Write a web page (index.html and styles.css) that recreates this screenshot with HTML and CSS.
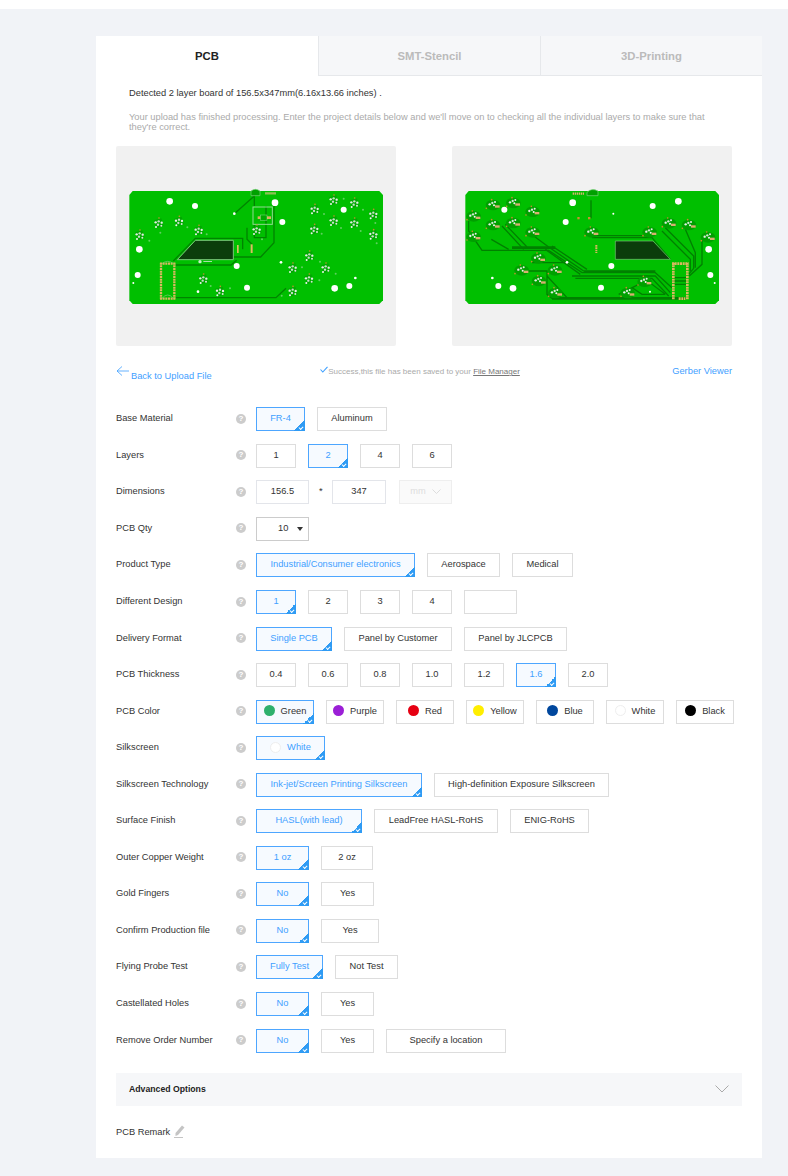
FILE: index.html
```html
<!DOCTYPE html>
<html lang="en">
<head>
  <meta charset="UTF-8" />
  <title>PCB Quote</title>
  <link rel="stylesheet" href="styles.css">
</head>
<body>
  <div class="topbar"></div>

  <!-- shared board parts -->
  <svg class="defs" width="0" height="0">
    <defs>
      <g id="part">
        <path d="M-13 -9 L9 -15 L16 8 L-5 15 Z" fill="#00a800"/>
        <circle cx="-8" cy="-3" r="3.5" fill="#e4efe4"/>
        <circle cx="1" cy="-6" r="3.5" fill="#c4e0c6"/>
        <circle cx="10" cy="-2" r="3.5" fill="#e4efe4"/>
        <circle cx="-1" cy="4" r="3.5" fill="#c4e0c6"/>
        <circle cx="9" cy="7" r="3" fill="#d4e8d4"/>
        <circle cx="-7" cy="11" r="3" fill="#eef5ee"/>
        <circle cx="2" cy="-16" r="2.5" fill="#c88a30"/>
      </g>
      <g id="part-back">
        <ellipse cx="1" cy="2" rx="22" ry="16" fill="#00a000"/>
        <circle cx="-9" cy="0" r="3.5" fill="#e4efe4"/>
        <circle cx="-1" cy="-4" r="3.5" fill="#cfe8d0"/>
        <circle cx="7" cy="-7" r="3" fill="#e4efe4"/>
        <circle cx="4" cy="3" r="3" fill="#eef5ee"/>
        <rect x="7" y="3" width="14" height="7" fill="#d8b070"/>
        <circle cx="-3" cy="-14" r="2.5" fill="#c88a30"/>
        <circle cx="-19" cy="12" r="2.5" fill="#c88a30"/>
      </g>
    </defs>
  </svg>

  <div class="card">
    <div class="tabs">
      <div class="tab active">PCB</div>
      <div class="tab">SMT-Stencil</div>
      <div class="tab">3D-Printing</div>
    </div>

    <div class="intro">
      <p class="detected">Detected 2 layer board of 156.5x347mm(6.16x13.66 inches) .</p>
      <p class="note">Your upload has finished processing. Enter the project details below and we'll move on to checking all the individual layers to make sure that they're correct.</p>
    </div>

    <div class="previews">
      <div class="preview">
        <svg width="280" height="130" viewBox="0 0 840 390">
          <path d="M50 30 H790 L801 42 V358 L790 369 H50 L40 358 V42 Z" fill="#00bf00"/>
          <path d="M355 98 L415 45 V75 M393 140 V175 L408 190 V215 M415 130 V170 H450 V75 M474 60 V185 L434 228 H352 M172 240 L238 172 H380 V205 M180 252 H345 L362 238 M180 350 H480 L510 322" fill="none" stroke="#008400" stroke-width="4"/>
          <path d="M405 30 Q418 20 432 30 V44 H405 Z" fill="#00a000" stroke="#7bd07b" stroke-width="2"/>
          <path d="M448 37 H480" stroke="#d8c080" stroke-width="7" stroke-dasharray="4 2"/>
          <path d="M238 178 H352 V236 H184 Z" fill="#0b3d0b" stroke="#79c879" stroke-width="3"/>
          <rect x="411" y="78" width="58" height="52" fill="none" stroke="#8fdc8f" stroke-width="3"/>
          <rect x="425" y="106" width="40" height="8" fill="#d8b060"/>
          <rect x="433" y="102" width="20" height="16" fill="#00a800" stroke="#c8eec8"/>
          <rect x="363" y="192" width="5" height="24" fill="#d8c060"/>
          <rect x="404" y="190" width="6" height="26" fill="#d8c060"/>
          <path d="M135 245 V356 M175 245 V356 M132 248 H178 M132 353 H178" fill="none" stroke="#d8b860" stroke-width="7" stroke-dasharray="6 2"/>
          <path d="M138 248 Q155 234 172 248 M138 352 Q155 332 172 352" fill="none" stroke="#7bd07b" stroke-width="2"/>
          <circle cx="252" cy="242" r="5" fill="#c8eec8"/>
          <rect x="262" y="240" width="26" height="3" fill="#a8e0a8"/>
          <g fill="#fff">
            <circle cx="161" cy="61" r="10"/><circle cx="237" cy="75" r="9"/><circle cx="477" cy="65" r="10"/>
            <circle cx="499" cy="123" r="9"/><circle cx="683" cy="86" r="9"/><circle cx="70" cy="205" r="10"/>
            <circle cx="362" cy="255" r="9"/><circle cx="65" cy="282" r="9"/><circle cx="393" cy="320" r="9"/>
            <circle cx="656" cy="322" r="10"/><circle cx="700" cy="315" r="9"/><circle cx="355" cy="98" r="4"/>
            <circle cx="495" cy="244" r="4"/><circle cx="718" cy="291" r="4"/><circle cx="52" cy="306" r="3"/>
            <circle cx="246" cy="332" r="4"/>
          </g>
          <use href="#part" x="127" y="127"/><use href="#part" x="188" y="122"/><use href="#part" x="247" y="149"/>
          <use href="#part" x="70" y="163"/><use href="#part" x="595" y="86"/><use href="#part" x="652" y="58"/>
          <use href="#part" x="714" y="67"/><use href="#part" x="771" y="101"/><use href="#part" x="652" y="121"/>
          <use href="#part" x="714" y="127"/><use href="#part" x="594" y="146"/><use href="#part" x="771" y="162"/>
          <use href="#part" x="421" y="148"/><use href="#part" x="579" y="226"/><use href="#part" x="529" y="262"/>
          <use href="#part" x="628" y="262"/><use href="#part" x="578" y="295"/><use href="#part" x="529" y="332"/>
          <use href="#part" x="261" y="295"/><use href="#part" x="311" y="332"/>
          <g fill="#5fd05f">
            <circle cx="133" cy="155" r="3"/><circle cx="100" cy="179" r="3"/><circle cx="214" cy="139" r="3"/>
            <circle cx="272" cy="160" r="3"/><circle cx="624" cy="99" r="3"/><circle cx="683" cy="53" r="3"/>
            <circle cx="741" cy="86" r="3"/><circle cx="675" cy="141" r="3"/><circle cx="617" cy="158" r="3"/>
            <circle cx="734" cy="150" r="3"/><circle cx="778" cy="126" r="3"/><circle cx="782" cy="187" r="3"/>
            <circle cx="612" cy="242" r="3"/><circle cx="558" cy="259" r="3"/><circle cx="659" cy="278" r="3"/>
            <circle cx="610" cy="298" r="3"/><circle cx="284" cy="315" r="3"/><circle cx="342" cy="322" r="3"/>
            <circle cx="438" cy="175" r="3"/><circle cx="497" cy="344" r="3"/>
          </g>
        </svg>
      </div>
      <div class="preview">
        <svg width="280" height="130" viewBox="0 0 840 390">
          <path d="M50 30 H790 L801 42 V358 L790 369 H50 L40 358 V42 Z" fill="#00bf00"/>
          <g fill="none" stroke="#008000" stroke-width="4">
            <path d="M50 120 V150 L90 208 H290 L390 275 H610 L660 320"/>
            <path d="M118 175 L170 205 M160 130 L225 198 M225 150 L290 198 M150 135 L215 205"/>
            <path d="M290 198 L395 270 M300 195 L405 265 M280 205 L385 280"/>
            <path d="M240 245 H340 M190 270 H285 V340 L300 352 H700 M285 285 L345 350"/>
            <path d="M360 285 H610 L655 335 M370 292 H600 L650 345 M420 170 H600 L655 235 M430 164 H600"/>
            <path d="M640 140 L725 225 V262 L710 280 M630 150 L715 235 V270 M700 145 L730 215 V260 M750 170 V250 L712 285"/>
            <path d="M417 58 V112 M500 340 L560 310 H600 L640 340 M540 320 L570 340 H640"/>
            <path d="M660 290 H702 M660 300 H702 M660 310 H702"/>
          </g>
          <path d="M180 200 H310 M395 272 H610 M300 352 H700" fill="none" stroke="#008000" stroke-width="8"/>
          <path d="M405 34 Q418 20 438 30 V44 H405 Z" fill="#00a000" stroke="#7bd07b" stroke-width="2"/>
          <path d="M362 38 H396" stroke="#d8b070" stroke-width="7" stroke-dasharray="4 2"/>
          <path d="M490 180 H603 L655 235 H490 Z" fill="#0b3d0b" stroke="#79c879" stroke-width="2"/>
          <path d="M433 192 V216" stroke="#d8b860" stroke-width="6" stroke-dasharray="5 2"/>
          <rect x="376" y="108" width="7" height="7" fill="#c89030"/>
          <rect x="408" y="108" width="7" height="7" fill="#c89030"/>
          <path d="M664 245 V356 M706 245 V356 M660 248 H710 M680 353 H700" fill="none" stroke="#d8b860" stroke-width="8" stroke-dasharray="6 2"/>
          <g fill="#fff">
            <circle cx="362" cy="65" r="10"/><circle cx="157" cy="86" r="9"/><circle cx="602" cy="75" r="9"/>
            <circle cx="679" cy="61" r="10"/><circle cx="341" cy="123" r="9"/><circle cx="770" cy="205" r="10"/>
            <circle cx="478" cy="255" r="9"/><circle cx="775" cy="282" r="9"/><circle cx="447" cy="320" r="9"/>
            <circle cx="183" cy="322" r="10"/><circle cx="139" cy="315" r="9"/><circle cx="484" cy="98" r="3"/>
            <circle cx="345" cy="244" r="4"/><circle cx="121" cy="291" r="4"/><circle cx="788" cy="306" r="3"/>
            <circle cx="594" cy="332" r="3"/>
          </g>
          <use href="#part-back" x="122" y="70"/><use href="#part-back" x="183" y="64"/><use href="#part-back" x="241" y="90"/>
          <use href="#part-back" x="64" y="104"/><use href="#part-back" x="122" y="130"/><use href="#part-back" x="183" y="124"/>
          <use href="#part-back" x="241" y="152"/><use href="#part-back" x="64" y="165"/><use href="#part-back" x="418" y="152"/>
          <use href="#part-back" x="592" y="152"/><use href="#part-back" x="650" y="125"/><use href="#part-back" x="710" y="130"/>
          <use href="#part-back" x="767" y="167"/><use href="#part-back" x="258" y="230"/><use href="#part-back" x="208" y="266"/>
          <use href="#part-back" x="308" y="266"/><use href="#part-back" x="260" y="298"/><use href="#part-back" x="309" y="334"/>
          <use href="#part-back" x="577" y="300"/><use href="#part-back" x="526" y="334"/>
        </svg>
      </div>
    </div>

    <div class="links">
      <a class="back">
        <svg width="13" height="11" viewBox="0 0 13 11"><path d="M13 5 H1 M6 0.5 L1 5 L6 9.5" fill="none" stroke="#3fa0ff" stroke-width="0.8"/></svg>
        <span>Back to Upload File</span>
      </a>
      <div class="saved">
        <svg width="8" height="7" viewBox="0 0 8 7"><path d="M0.5 3.5 L2.8 6 L7.5 0.8" fill="none" stroke="#3fa0ff" stroke-width="1.1"/></svg>
        <span>Success,this file has been saved to your <u>File Manager</u></span>
      </div>
      <a class="viewer">Gerber Viewer</a>
    </div>

    <div class="form">
      <div class="row">
        <label>Base Material</label><i class="help">?</i>
        <div class="opts"><span class="opt on w49">FR-4</span><span class="opt w70">Aluminum</span></div>
      </div>
      <div class="row">
        <label>Layers</label><i class="help">?</i>
        <div class="opts"><span class="opt w40">1</span><span class="opt on w40">2</span><span class="opt w40">4</span><span class="opt w40">6</span></div>
      </div>
      <div class="row">
        <label>Dimensions</label><i class="help">?</i>
        <div class="opts">
          <span class="opt field w53">156.5</span><span class="times">*</span><span class="opt field w54">347</span>
          <span class="opt unit w53">mm
            <svg width="9" height="5" viewBox="0 0 9 5"><path d="M0.5 0.5 L4.5 4.5 L8.5 0.5" fill="none" stroke="#ddd"/></svg>
          </span>
        </div>
      </div>
      <div class="row">
        <label>PCB Qty</label><i class="help">?</i>
        <div class="opts"><span class="opt qty w53">10<b class="caret"></b></span></div>
      </div>
      <div class="row">
        <label>Product Type</label><i class="help">?</i>
        <div class="opts"><span class="opt on w159">Industrial/Consumer electronics</span><span class="opt w73">Aerospace</span><span class="opt w61">Medical</span></div>
      </div>
      <div class="row">
        <label>Different Design</label><i class="help">?</i>
        <div class="opts"><span class="opt on w40">1</span><span class="opt w40">2</span><span class="opt w40">3</span><span class="opt w40">4</span><span class="opt w53"></span></div>
      </div>
      <div class="row">
        <label>Delivery Format</label><i class="help">?</i>
        <div class="opts"><span class="opt on w76">Single PCB</span><span class="opt w108">Panel by Customer</span><span class="opt w103">Panel by JLCPCB</span></div>
      </div>
      <div class="row">
        <label>PCB Thickness</label><i class="help">?</i>
        <div class="opts"><span class="opt w40">0.4</span><span class="opt w40">0.6</span><span class="opt w40">0.8</span><span class="opt w40">1.0</span><span class="opt w40">1.2</span><span class="opt on w40">1.6</span><span class="opt w40">2.0</span></div>
      </div>
      <div class="row">
        <label>PCB Color</label><i class="help">?</i>
        <div class="opts">
          <span class="opt on plain w58"><i class="dot green"></i>Green</span>
          <span class="opt w58"><i class="dot purple"></i>Purple</span>
          <span class="opt w58"><i class="dot red"></i>Red</span>
          <span class="opt w58"><i class="dot yellow"></i>Yellow</span>
          <span class="opt w58"><i class="dot blue"></i>Blue</span>
          <span class="opt w58"><i class="dot white"></i>White</span>
          <span class="opt w58"><i class="dot black"></i>Black</span>
        </div>
      </div>
      <div class="row">
        <label>Silkscreen</label><i class="help">?</i>
        <div class="opts"><span class="opt on w69"><i class="dot white"></i>White</span></div>
      </div>
      <div class="row">
        <label>Silkscreen Technology</label><i class="help">?</i>
        <div class="opts"><span class="opt on w166">Ink-jet/Screen Printing Silkscreen</span><span class="opt w175">High-definition Exposure Silkscreen</span></div>
      </div>
      <div class="row">
        <label>Surface Finish</label><i class="help">?</i>
        <div class="opts"><span class="opt on w106">HASL(with lead)</span><span class="opt w124">LeadFree HASL-RoHS</span><span class="opt w79">ENIG-RoHS</span></div>
      </div>
      <div class="row">
        <label>Outer Copper Weight</label><i class="help">?</i>
        <div class="opts"><span class="opt on w53">1 oz</span><span class="opt w52">2 oz</span></div>
      </div>
      <div class="row">
        <label>Gold Fingers</label><i class="help">?</i>
        <div class="opts"><span class="opt on w53">No</span><span class="opt w53">Yes</span></div>
      </div>
      <div class="row">
        <label>Confirm Production file</label><i class="help">?</i>
        <div class="opts"><span class="opt on w53">No</span><span class="opt w58">Yes</span></div>
      </div>
      <div class="row">
        <label>Flying Probe Test</label><i class="help">?</i>
        <div class="opts"><span class="opt on w67">Fully Test</span><span class="opt w63">Not Test</span></div>
      </div>
      <div class="row">
        <label>Castellated Holes</label><i class="help">?</i>
        <div class="opts"><span class="opt on w53">No</span><span class="opt w53">Yes</span></div>
      </div>
      <div class="row">
        <label>Remove Order Number</label><i class="help">?</i>
        <div class="opts"><span class="opt on w53">No</span><span class="opt w53">Yes</span><span class="opt w120">Specify a location</span></div>
      </div>
    </div>

    <div class="advanced">
      <span>Advanced Options</span>
      <svg width="14" height="8" viewBox="0 0 14 8"><path d="M0.5 0.5 L7 7 L13.5 0.5" fill="none" stroke="#aaa"/></svg>
    </div>

    <div class="remark">
      <span>PCB Remark</span>
      <svg width="11" height="13" viewBox="0 0 11 13"><path d="M8 0.5 L10.5 2.5 L4 10 L1.5 11 L1.5 8 Z" fill="#c4c4c4"/><path d="M0 12.5 H9" stroke="#c4c4c4"/></svg>
    </div>
  </div>
</body>
</html>
```

FILE: styles.css
```css
body {
  margin: 0;
  background-color: #f1f3f7;
  font-family: "Liberation Sans", Arial, sans-serif;
  font-size: 9.3px;
  color: #333;
}
.topbar {
  height: 9px;
  background-color: #fff;
}
.defs {
  display: block;
  height: 0;
}
.card {
  width: 666px;
  height: 1122px;
  margin: 27px 0 18px 96px;
  background-color: #fff;
}

/* tabs */
.tabs {
  display: flex;
  height: 40px;
}
.tab {
  flex: 1;
  display: flex;
  align-items: center;
  justify-content: center;
  background-color: #f6f7f9;
  border-left: 1px solid #e6e8eb;
  border-bottom: 1px solid #e6e8eb;
  color: #bbb;
  font-size: 11.3px;
  font-weight: bold;
}
.tab.active {
  flex: 0 0 222px;
  background-color: #fff;
  border: none;
  color: #222;
}

/* intro */
.intro {
  padding: 12px 50px 0 33px;
}
.intro p {
  margin: 0;
}
.detected {
  line-height: 11px;
  color: #333;
}
.note {
  padding-top: 13px;
  line-height: 10px;
  color: #aaa;
}

/* board previews */
.previews {
  display: flex;
  justify-content: space-between;
  padding: 14px 30px 0 20px;
}
.preview {
  display: flex;
  align-items: center;
  width: 280px;
  height: 200px;
  background-color: #f1f1f1;
  border-radius: 2px;
}

.links {
  display: flex;
  justify-content: space-between;
  height: 55px;
  padding: 20px 30px 0 20px;
  box-sizing: border-box;
  color: #3fa0ff;
}
.back {
  display: flex;
  width: 200px;
  gap: 2px;
}
.back span {
  padding-top: 5px;
}
.saved {
  display: flex;
  align-items: flex-start;
  color: #aaa;
  font-size: 8px;
}
.saved span {
  padding-top: 1px;
}
.saved u {
  color: #777;
}
.viewer {
  width: 208px;
  text-align: right;
}

/* form rows */
.form {
  padding-left: 20px;
}
.row {
  display: flex;
  align-items: center;
  height: 36.56px;
}
.row label {
  width: 120px;
  margin-bottom: 2px;
}
.help {
  width: 10px;
  height: 10px;
  margin-bottom: 1px;
  border-radius: 50%;
  background-color: #ccc;
  color: #fff;
  font-size: 8px;
  font-style: normal;
  font-weight: bold;
  line-height: 10px;
  text-align: center;
}
.opts {
  display: flex;
  gap: 12px;
  margin-left: 10px;
}
.opt {
  position: relative;
  display: flex;
  align-items: center;
  justify-content: center;
  box-sizing: border-box;
  height: 24px;
  padding-bottom: 2px;
  border: 1px solid #ddd;
}
.opt.on {
  background-color: #f6faff;
  border-color: #4da6ff;
  color: #3fa0ff;
}
.opt.plain {
  color: #333;
}
.opt.on::after {
  content: "";
  position: absolute;
  right: -1px;
  bottom: -1px;
  width: 11px;
  height: 11px;
  background: linear-gradient(135deg, transparent 50%, #2f9bf4 50%);
}
.opt.on::before {
  content: "";
  position: absolute;
  right: 1px;
  bottom: 1px;
  z-index: 1;
  width: 3px;
  height: 2px;
  border-left: 1px solid #fff;
  border-bottom: 1px solid #fff;
  transform: rotate(-45deg);
}
.field {
  border-color: #e3e5ea;
}
.times {
  width: 0;
  margin-right: -1px;
  padding-top: 6px;
  line-height: 10px;
  text-indent: -2px;
}
.unit {
  margin-left: 1px;
  gap: 6px;
  background-color: #fafafa;
  border-color: #eee;
  color: #ddd;
}
.qty {
  justify-content: flex-start;
  padding-left: 21px;
  border-color: #ccc;
}
.caret {
  margin-left: 9px;
  margin-top: 2px;
  border-top: 4px solid #333;
  border-left: 3.5px solid transparent;
  border-right: 3.5px solid transparent;
}
.dot {
  flex: none;
  width: 11px;
  height: 11px;
  margin-right: 6px;
  border-radius: 50%;
}
.green { background-color: #2eb06c; }
.purple { background-color: #9b1fd6; }
.red { background-color: #e60012; }
.yellow { background-color: #ffee00; }
.blue { background-color: #00479d; }
.white { background-color: #fff; border: 1px solid #eee; box-sizing: border-box; }
.black { background-color: #000; }

.w40 { width: 40px; }
.w49 { width: 49px; }
.w52 { width: 52px; }
.w53 { width: 53px; }
.w54 { width: 54px; }
.w58 { width: 58px; }
.w61 { width: 61px; }
.w63 { width: 63px; }
.w67 { width: 67px; }
.w69 { width: 69px; }
.w70 { width: 70px; }
.w73 { width: 73px; }
.w76 { width: 76px; }
.w79 { width: 79px; }
.w103 { width: 103px; }
.w106 { width: 106px; }
.w108 { width: 108px; }
.w120 { width: 120px; }
.w124 { width: 124px; }
.w159 { width: 159px; }
.w166 { width: 166px; }
.w175 { width: 175px; }

.advanced {
  display: flex;
  align-items: center;
  justify-content: space-between;
  height: 33px;
  margin: 14.2px 20px 0;
  padding: 0 13px 2px;
  box-sizing: border-box;
  background-color: #f6f7f9;
  font-size: 8.7px;
  font-weight: bold;
  color: #222;
}
.remark {
  display: flex;
  align-items: center;
  gap: 4px;
  margin: 19px 0 0 20px;
}
```
